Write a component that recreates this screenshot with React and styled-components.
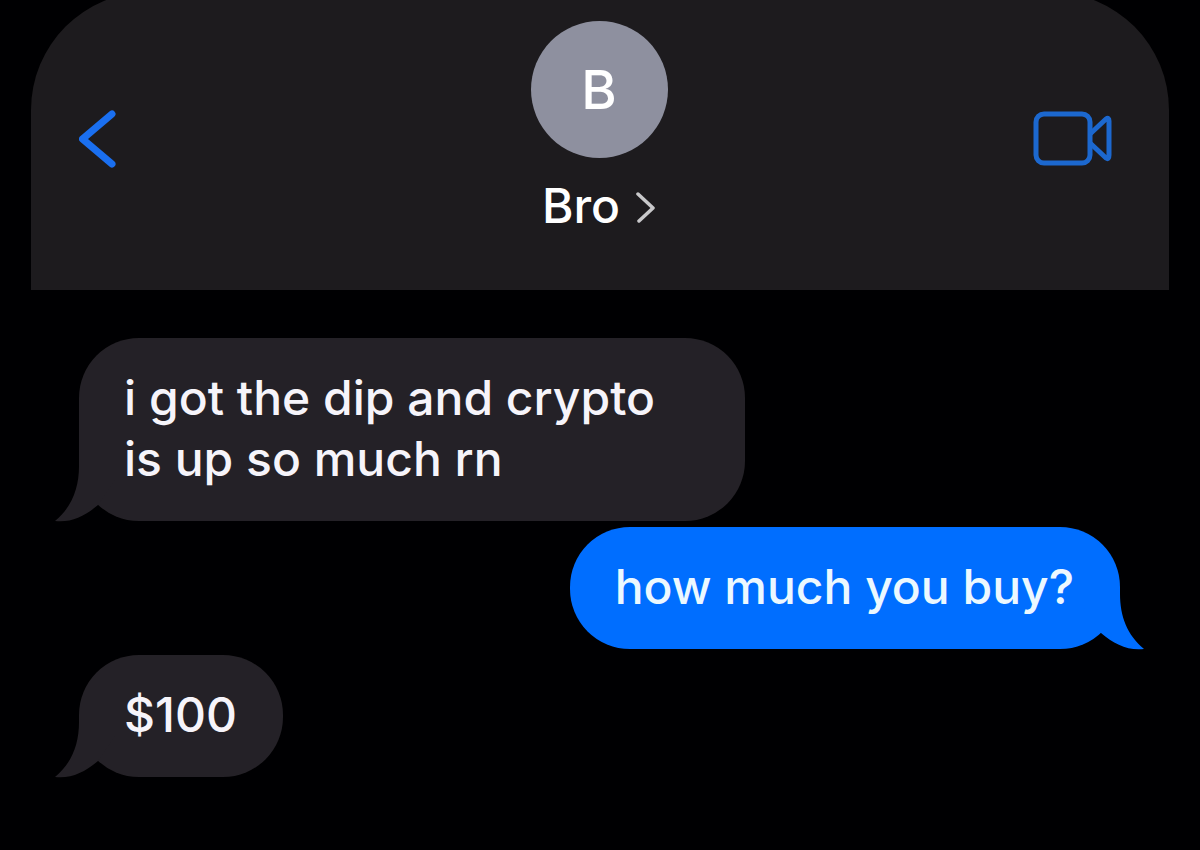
import React from "react";
import styled, { createGlobalStyle } from "styled-components";

const messages = [
    { id: 1, mine: false, text: "i got the dip and crypto is up so much rn" },
    { id: 2, mine: true, text: "how much you buy?" },
    { id: 3, mine: false, text: "$100" }
];

const App = () => (
    <>
        <GlobalStyle />
        <Screen>
            <Header>
                <IconButton type="button" aria-label="Back">
                    <svg width="40" height="60" viewBox="0 0 40 60" fill="none" stroke="#1a6ff0" strokeWidth="7" strokeLinecap="round" strokeLinejoin="round">
                        <path d="M33 5 L3.5 30 L33 55" />
                    </svg>
                </IconButton>
                <Contact>
                    <Avatar>B</Avatar>
                    <Name type="button">
                        Bro
                        <svg width="20" height="34" viewBox="0 0 20 34" fill="none" stroke="#c8c8ca" strokeWidth="3.5" strokeLinecap="round" strokeLinejoin="round">
                            <path d="M2 5 L17 19 L3 32" />
                        </svg>
                    </Name>
                </Contact>
                <IconButton type="button" aria-label="Video call" $end>
                    <svg width="80" height="56" viewBox="0 0 80 56" fill="none" stroke="#1c68cf" strokeWidth="5" strokeLinejoin="round">
                        <rect x="3" y="3" width="54" height="49" rx="8" />
                        <path d="M57 23 L73 8 Q76 6 76 10 V44 Q76 49 73 47 L57 32" />
                    </svg>
                </IconButton>
            </Header>
            <Thread>
                {messages.map(({ id, mine, text }) => (
                    <Bubble key={id} $mine={mine}>
                        {text}
                        <Tail $mine={mine} width="60" height="62" viewBox="0 0 60 62" aria-hidden="true">
                            <path d="M24 0 V6 C24 28 17 47 0 61 C16 63 30 56 43 45 L60 20 V0 Z" />
                        </Tail>
                    </Bubble>
                ))}
            </Thread>
        </Screen>
    </>
);

const GlobalStyle = createGlobalStyle`
  * {
    box-sizing: border-box;
  }

  body {
    margin: 0;
    background: #000002;
    color: #f6f4fa;
    font-family: Inter, "Liberation Sans", sans-serif;
  }
`;

const Screen = styled.main`
  min-height: 100vh;
  padding: 0 31px;
  overflow: hidden;
`;

const Header = styled.header`
  display: grid;
  grid-template-columns: 1fr auto 1fr;
  align-items: center;
  margin-top: -8px;
  padding: 29px 50px 34px 48px;
  border-radius: 118px 118px 0 0;
  background: #1d1b1e;
`;

const IconButton = styled.button`
  display: flex;
  justify-self: ${({ $end }) => ($end ? "end" : "start")};
  padding: ${({ $end }) => ($end ? "0 6px 0 0" : "0")};
  border: 0;
  background: none;
  cursor: pointer;
`;

const Contact = styled.div`
  display: flex;
  flex-direction: column;
  align-items: center;
  gap: 18px;
  padding-bottom: 20px;
`;

const Avatar = styled.div`
  display: grid;
  place-items: center;
  width: 137px;
  height: 137px;
  border-radius: 50%;
  background: #8e909f;
  color: #fff;
  font-size: 54px;
  font-weight: 500;
`;

const Name = styled.button`
  display: flex;
  align-items: center;
  gap: 16px;
  padding: 0;
  border: 0;
  background: none;
  color: #fff;
  font: 500 48px/60px Inter, "Liberation Sans", sans-serif;
  cursor: pointer;
`;

const Thread = styled.section`
  display: flex;
  flex-direction: column;
  gap: 6px;
  padding: 48px 49px 48px 48px;
`;

const Bubble = styled.div`
  position: relative;
  align-self: ${({ $mine }) => ($mine ? "flex-end" : "flex-start")};
  max-width: 64%;
  padding: 29px 46px 32px 45px;
  border-radius: 60px;
  background: ${({ $mine }) => ($mine ? "#006eff" : "#242127")};
  color: ${({ $mine }) => ($mine ? "#ecf8ff" : "#f6f4fa")};
  font-size: 48px;
  font-weight: 500;
  line-height: 61px;
`;

const Tail = styled.svg`
  position: absolute;
  bottom: -1px;
  ${({ $mine }) => ($mine ? "right: -24px; transform: scaleX(-1);" : "left: -24px;")}
  fill: ${({ $mine }) => ($mine ? "#006eff" : "#242127")};
`;

export default App;
